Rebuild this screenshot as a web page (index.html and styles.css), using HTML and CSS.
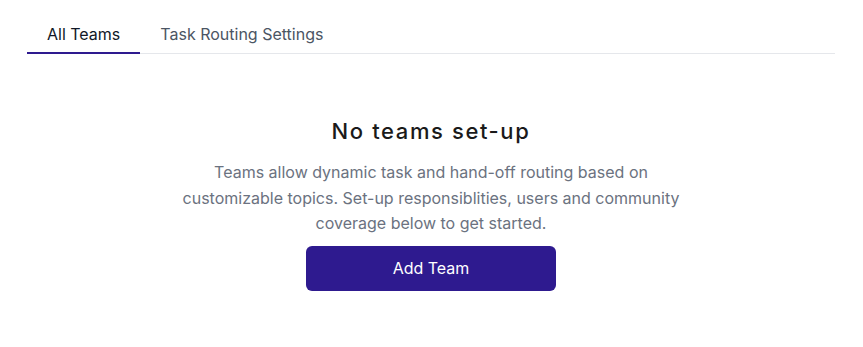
FILE: index.html
```html
<!DOCTYPE html>
<html lang="en">
<head>
<meta charset="utf-8">
<title>Teams</title>
<link rel="stylesheet" href="styles.css">
</head>
<body>
<div class="page">
  <nav class="tabs">
    <a class="tab active">All Teams</a>
    <a class="tab">Task Routing Settings</a>
  </nav>
  <section class="empty">
    <h2 class="empty-title">No teams set-up</h2>
    <p class="empty-text">Teams allow dynamic task and hand-off routing based on customizable topics. Set-up responsiblities, users and community coverage below to get started.</p>
    <button class="btn-primary">Add Team</button>
  </section>
</div>
</body>
</html>
```

FILE: styles.css
```css
* { box-sizing: border-box; }
html, body { margin: 0; padding: 0; background: #ffffff; }
body { font-family: Inter, "Noto Sans", sans-serif; color: #1f2937; }
.page { padding: 22px 28px 0 27px; }
.tabs {
  display: flex;
  border-bottom: 1px solid #e5e7eb;
}
.tab {
  padding: 0 20px 6px;
  line-height: 24px;
  font-size: 16px;
  color: #4b5563;
  border-bottom: 2px solid transparent;
  margin-bottom: -1px;
  cursor: pointer;
}
.tab.active {
  color: #111827;
  border-bottom-color: #2e1a8f;
}
.empty {
  display: flex;
  flex-direction: column;
  align-items: center;
  margin-top: 62px;
}
.empty-title {
  margin: 0;
  font-family: Inter, sans-serif;
  font-weight: 500;
  font-size: 22px;
  line-height: 30px;
  letter-spacing: 1.6px;
  color: #1a1a1a;
}
.empty-text {
  margin: 14px 0 0;
  max-width: 512px;
  text-align: center;
  font-size: 16px;
  line-height: 25.6px;
  color: #6b7280;
}
.btn-primary {
  margin-top: 9px;
  width: 250px;
  height: 45px;
  border: none;
  border-radius: 6px;
  background: #2e1a8f;
  color: #ffffff;
  font-family: Inter, sans-serif;
  font-size: 16px;
  cursor: pointer;
}
```
